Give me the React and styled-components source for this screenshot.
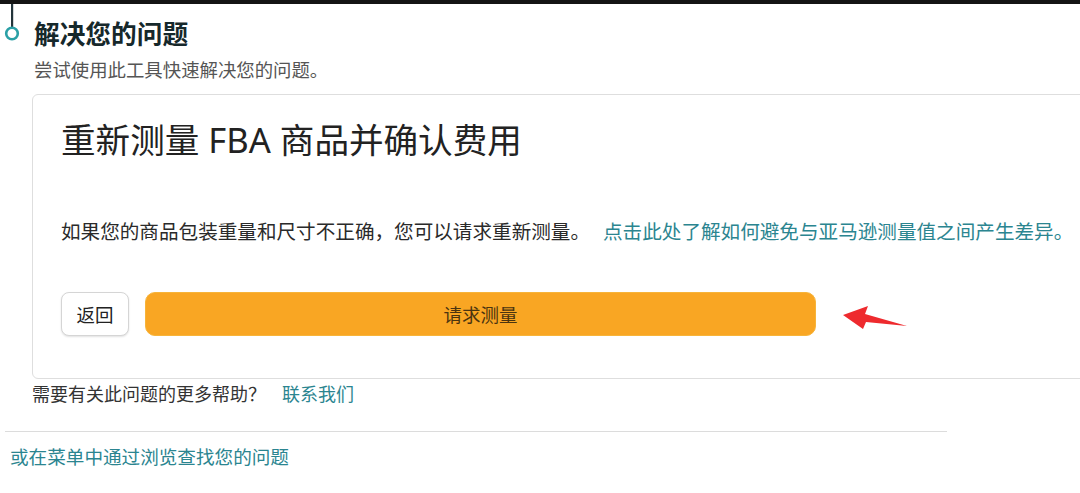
import React from "react";
import styled, { createGlobalStyle } from "styled-components";

const GlobalStyle = createGlobalStyle`
  body {
    margin: 0;
    background: #fff;
    overflow: hidden;
    font-family: "Noto Sans", "Noto Sans CJK SC", sans-serif;
    color: #2b2b2b;
  }
`;

const Page = styled.div`
  width: 1080px;
  height: 493px;
  overflow: hidden;
`;

const TopBar = styled.div`
  height: 4px;
  background: #141414;
`;

const Header = styled.div`
  display: flex;
  align-items: flex-start;
  gap: 10px;
`;

const Title = styled.h1`
  margin: 0;
  padding-top: 15px;
  font-size: 25.7px;
  line-height: 32px;
  font-weight: 700;
  color: #16282b;
`;

const Subtitle = styled.p`
  margin: 7px 0 0 34px;
  font-size: 18.4px;
  line-height: 24px;
  color: #555;
`;

const Card = styled.section`
  margin: 12px 0 0 32px;
  width: 1100px;
  box-sizing: border-box;
  border: 1px solid #dedede;
  border-radius: 6px;
  padding: 25px 28px 42px;
`;

const CardTitle = styled.h2`
  margin: 0;
  font-size: 34.6px;
  line-height: 40px;
  font-weight: 400;
  color: #222;
`;

const Body = styled.p`
  margin: 58px 0 0;
  font-size: 19.6px;
  line-height: 28px;
  color: #2a2a2a;
  white-space: nowrap;
`;

const Link = styled.a`
  color: ${(p) => p.$color || "#2b8590"};
  text-decoration: none;
  margin-left: ${(p) => p.$gap || 0}px;
`;

const Actions = styled.div`
  margin-top: 46px;
  display: flex;
  align-items: center;
  gap: 16px;
`;

const Button = styled.button`
  height: 44px;
  box-sizing: border-box;
  font-family: inherit;
  font-size: 18.5px;
  cursor: pointer;
  border-radius: ${(p) => (p.$primary ? "10px" : "8px")};
  border: 1px solid ${(p) => (p.$primary ? "#f7b43a" : "#d5d5d5")};
  background: ${(p) => (p.$primary ? "#f9a623" : "#fff")};
  width: ${(p) => (p.$primary ? "671px" : "68px")};
  box-shadow: ${(p) => (p.$primary ? "none" : "0 1px 2px rgba(0,0,0,0.12)")};
  color: ${(p) => (p.$primary ? "#4a3410" : "#222")};
`;

const Arrow = styled.svg`
  margin-left: 10px;
  margin-top: 6px;
`;

const Help = styled.p`
  margin: 2px 0 0 32px;
  font-size: 18px;
  line-height: 26px;
  color: #333;
`;

const Divider = styled.hr`
  margin: 24px 0 0 5px;
  width: 942px;
  border: none;
  border-top: 1.5px solid #dcdcdc;
`;

const Browse = styled.p`
  margin: 11px 0 0 10px;
  font-size: 18.6px;
  line-height: 28px;
`;

function Marker() {
  return (
    <svg width="24" height="44" viewBox="0 0 24 44">
      <rect x="11" y="0" width="2.2" height="24" fill="#23343a" />
      <circle cx="12" cy="29.5" r="5.8" fill="#fff" stroke="#2aa0a6" strokeWidth="2.6" />
    </svg>
  );
}

export default function App() {
  return (
    <Page>
      <GlobalStyle />
      <TopBar />
      <Header>
        <Marker />
        <Title>解决您的问题</Title>
      </Header>
      <Subtitle>尝试使用此工具快速解决您的问题。</Subtitle>
      <Card>
        <CardTitle>重新测量 FBA 商品并确认费用</CardTitle>
        <Body>
          如果您的商品包装重量和尺寸不正确，您可以请求重新测量。
          <Link $gap={13}>点击此处了解如何避免与亚马逊测量值之间产生差异。</Link>
        </Body>
        <Actions>
          <Button>返回</Button>
          <Button $primary>请求测量</Button>
          <Arrow width="66" height="28" viewBox="0 0 66 28">
            <polygon
              points="1,12 26,3 23,11 65,23 24,19 21,26"
              fill="#ee2a2e"
            />
          </Arrow>
        </Actions>
      </Card>
      <Help>
        需要有关此问题的更多帮助？<Link $gap={16}>联系我们</Link>
      </Help>
      <Divider />
      <Browse>
        <Link>或在菜单中通过浏览查找您的问题</Link>
      </Browse>
    </Page>
  );
}
